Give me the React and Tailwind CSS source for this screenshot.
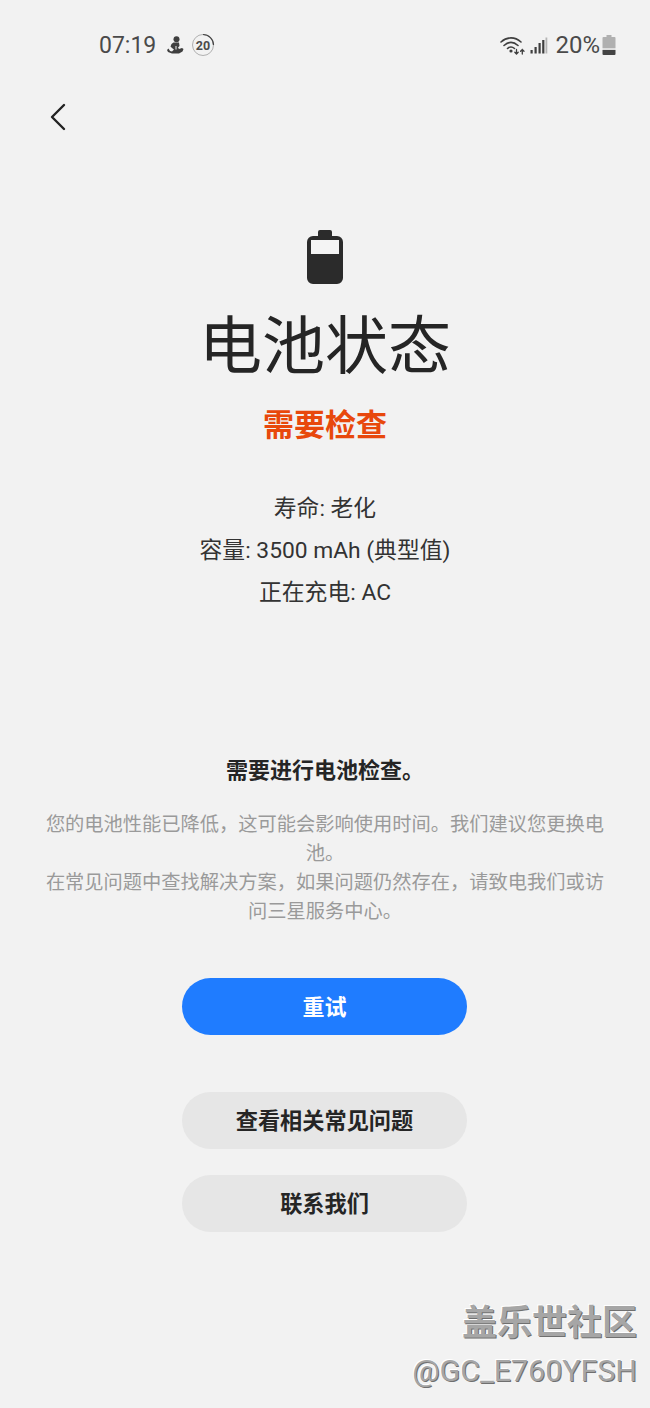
const cjk = { fontFamily: '"Roboto", "Noto Sans CJK SC", sans-serif' };

function Ring() {
  return (
    <svg width="24" height="24" viewBox="0 0 24 24" className="ml-[7px]">
      <circle cx="12" cy="12" r="10.500" fill="none" stroke="#b0b0b0" strokeWidth="1" />
      <path d="M12 1.500a10.500 10.500 0 0 1 10.500 10.500" fill="none" stroke="#444444" strokeWidth="1.200" />
      <text x="12" y="16.500" textAnchor="middle" fontSize="12.500" fontWeight="700" fill="#4a4a4a" fontFamily="Roboto">20</text>
    </svg>
  );
}

function Mascot() {
  return (
    <svg width="17" height="18" viewBox="0 0 17 18" className="ml-[11px]">
      <circle cx="9.500" cy="3.200" r="3" fill="#3f3f3f" />
      <path d="M6.500 6.500h5.500l.5 3.500-1.500 1.500 1 1.500 3-1 1.500 1-1 2.500-3.500 2H5l-4-1.500L0 14l1.500-1.500L3 15l2 .5 2-2-2-1.500-1.500-1.500 1-2.500z" fill="#3f3f3f" />
      <path d="M9 10v3.500" stroke="#f2f2f2" strokeWidth="1" />
    </svg>
  );
}

function Wifi() {
  return (
    <svg width="25" height="19" viewBox="0 0 25 19" fill="none" stroke="#3f3f3f" strokeWidth="1.600" strokeLinecap="round">
      <path d="M1 6C7 .5 15 .5 21 6" />
      <path d="M4 9.500C8.500 5.500 13.500 5.500 18 9.500" />
      <path d="M7.500 12.500c2-1.700 5-1.700 7 0" />
      <circle cx="11" cy="15" r="0.800" fill="#3f3f3f" />
      <path d="M16.500 13.500v4.500m-1.700-1.700l1.700 1.700 1.700-1.700" strokeWidth="1.300" />
      <path d="M22.300 18v-4.500m-1.700 1.700l1.700-1.700 1.700 1.700" strokeWidth="1.300" />
    </svg>
  );
}

function Signal() {
  return (
    <svg width="18" height="17" viewBox="0 0 18 17" className="ml-[5px]">
      <rect x="0.500" y="13" width="2.200" height="3.500" fill="#3f3f3f" />
      <rect x="4.500" y="10" width="2.200" height="6.500" fill="#3f3f3f" />
      <rect x="8.500" y="6" width="2.200" height="10.500" fill="#3f3f3f" />
      <rect x="12.200" y="3" width="2.200" height="13.500" fill="#3f3f3f" />
      <rect x="15.500" y="0.500" width="1.800" height="16" fill="#b5b5b5" />
    </svg>
  );
}

function SmallBattery() {
  return (
    <svg width="14" height="20" viewBox="0 0 14 20" className="ml-[2px]">
      <path d="M4.500 0h5v2h3a1 1 0 0 1 1 1v10H.5V3a1 1 0 0 1 1-1h3z" fill="#b0b0b0" />
      <path d="M0.500 13.500h13v1h-13z" fill="#c8c8c8" />
      <path d="M0.500 15h13v4a1 1 0 0 1-1 1h-11a1 1 0 0 1-1-1z" fill="#444444" />
    </svg>
  );
}

function StatusBar() {
  return (
    <div className="flex h-[36px] items-center justify-between mt-[27px] pl-[99px] pr-[34px]">
      <div className="flex items-center">
        <span className="text-[23px] leading-none text-[#4a4a4a]">07:19</span>
        <Mascot />
        <Ring />
      </div>
      <div className="flex items-center">
        <Wifi />
        <Signal />
        <span className="ml-[7px] text-[24px] leading-none text-[#4a4a4a]">20%</span>
        <SmallBattery />
      </div>
    </div>
  );
}

function BackButton() {
  return (
    <div className="pl-[50px] mt-[40px] h-[31px]">
      <svg width="16" height="28" viewBox="0 0 16 28" fill="none" stroke="#222222" strokeWidth="2.400" strokeLinecap="round" strokeLinejoin="round">
        <path d="M14 2L2 14l12 12" />
      </svg>
    </div>
  );
}

function BigBattery() {
  return (
    <svg width="36" height="54" viewBox="0 0 36 54">
      <path d="M11 2a2 2 0 0 1 2-2h10a2 2 0 0 1 2 2v4h5a6 6 0 0 1 6 6v36a6 6 0 0 1-6 6H6a6 6 0 0 1-6-6V12a6 6 0 0 1 6-6h5z" fill="#2b2b2b" />
      <rect x="4" y="10" width="28" height="14" fill="#f4f4f4" />
    </svg>
  );
}

export default function App() {
  return (
    <div style={cjk} className="w-[650px] h-[1408px] bg-[#f2f2f2] overflow-hidden relative">
      <StatusBar />
      <BackButton />

      <div className="flex flex-col items-center">
        <div className="mt-[96px]"><BigBattery /></div>
        <h1 className="mt-[23px] text-[63px] leading-[80px] font-normal text-[#252525]">电池状态</h1>
        <div className="mt-[19px] text-[31px] leading-[40px] font-bold text-[#e8480c]">需要检查</div>

        <div className="mt-[42px] flex flex-col items-center text-[22.800px] leading-[42px] text-[#333333]">
          <div>寿命: 老化</div>
          <div>容量: 3500 mAh (典型值)</div>
          <div>正在充电: AC</div>
        </div>

        <div className="mt-[142px] text-[22px] leading-[30px] font-bold text-[#252525]">需要进行电池检查。</div>
        <div className="mt-[24px] w-[570px] text-center text-[19.250px] leading-[29px] text-[#9a9a9a]">
          <p>您的电池性能已降低，这可能会影响使用时间。我们建议您更换电池。</p>
          <p>在常见问题中查找解决方案，如果问题仍然存在，请致电我们或访问三星服务中心。</p>
        </div>

        <button className="mt-[52px] mr-[1px] pt-[2px] w-[285px] h-[57px] rounded-full bg-[#1f7cff] text-white text-[22px] font-bold">重试</button>
        <button className="mt-[57px] mr-[1px] pt-[3px] w-[285px] h-[57px] rounded-full bg-[#e6e6e6] text-[#252525] text-[22.200px] font-bold">查看相关常见问题</button>
        <button className="mt-[26px] mr-[1px] pt-[2px] w-[285px] h-[57px] rounded-full bg-[#e6e6e6] text-[#252525] text-[22.200px] font-bold">联系我们</button>
      </div>

      <div className="absolute right-[13px] top-[1302px] flex flex-col items-end text-[#a6a6a6] [text-shadow:1px_1px_0_#6f6f6f,-1px_-1px_0_#ffffff]">
        <div className="text-[35px] leading-[44px] font-bold">盖乐世社区</div>
        <div className="text-[30.400px] leading-[40px] mt-[5px]">@GC_E760YFSH</div>
      </div>
    </div>
  );
}
